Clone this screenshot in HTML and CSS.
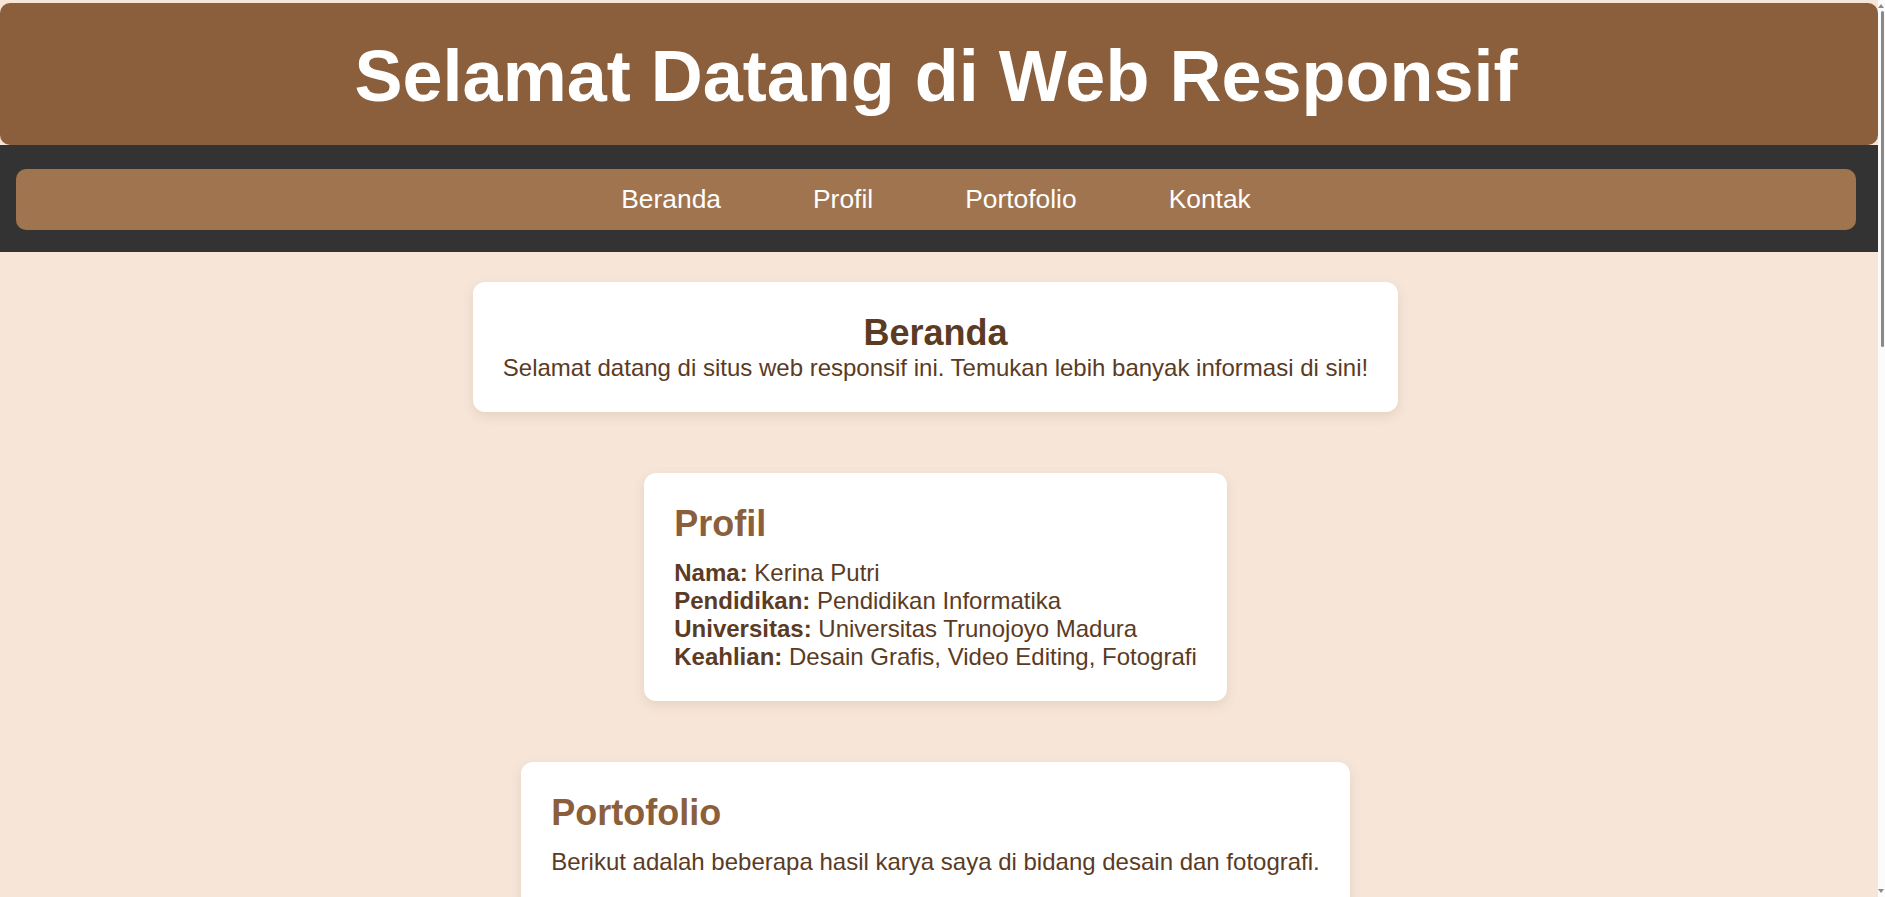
FILE: index.html
```html
<!DOCTYPE html>
<html lang="id">
<head>
<meta charset="utf-8">
<title>Web Responsif</title>
<link rel="stylesheet" href="styles.css">
</head>
<body>
  <header class="site-header">
    <h1 class="site-title">Selamat Datang di Web Responsif</h1>
  </header>
  <nav class="site-nav">
    <div class="nav-bar">
      <a class="nav-link" href="#beranda">Beranda</a>
      <a class="nav-link" href="#profil">Profil</a>
      <a class="nav-link" href="#portofolio">Portofolio</a>
      <a class="nav-link" href="#kontak">Kontak</a>
    </div>
  </nav>
  <main class="content">
    <section class="card card-center" id="beranda">
      <h2 class="card-title-dark">Beranda</h2>
      <p class="card-text">Selamat datang di situs web responsif ini. Temukan lebih banyak informasi di sini!</p>
    </section>
    <section class="card" id="profil">
      <h2 class="card-title">Profil</h2>
      <p class="card-text"><strong>Nama:</strong> Kerina Putri<br>
      <strong>Pendidikan:</strong> Pendidikan Informatika<br>
      <strong>Universitas:</strong> Universitas Trunojoyo Madura<br>
      <strong>Keahlian:</strong> Desain Grafis, Video Editing, Fotografi</p>
    </section>
    <section class="card card-tall" id="portofolio">
      <h2 class="card-title">Portofolio</h2>
      <p class="card-text">Berikut adalah beberapa hasil karya saya di bidang desain dan fotografi.</p>
    </section>
  </main>
  <div class="scrollbar" aria-hidden="true">
    <div class="scroll-arrow scroll-arrow-up"></div>
    <div class="scroll-thumb"></div>
    <div class="scroll-arrow scroll-arrow-down"></div>
  </div>
</body>
</html>
```

FILE: styles.css
```css
html {
  background: #f7e6d8;
  scrollbar-width: none;
}

html::-webkit-scrollbar {
  display: none;
}

body {
  margin: 0 7px 0 0;
  padding-top: 3px;
  background: #f7e6d8;
  font-family: "Liberation Sans", Arial, sans-serif;
  font-size: 24px;
  color: #5b3b24;
}

.site-header {
  background: #8b5e3c;
  border-radius: 10px;
}

.site-title {
  margin: 0;
  padding: 33px 6px 29px 0;
  font-size: 72px;
  line-height: 80px;
  font-weight: bold;
  color: #ffffff;
  text-align: center;
}

.site-nav {
  background: #333333;
  padding: 24px 22px 22px 16px;
}

.nav-bar {
  height: 61px;
  background: #a0744f;
  border-radius: 10px;
  display: flex;
  align-items: center;
  justify-content: center;
  gap: 92px;
}

.nav-link {
  color: #ffffff;
  text-decoration: none;
  font-size: 26.4px;
}

.content {
  display: flex;
  flex-direction: column;
  align-items: center;
  gap: 61px;
  padding: 30px 7px 1400px 0;
}

.card {
  background: #ffffff;
  border-radius: 12px;
  padding: 30px;
  box-shadow: 0 4px 12px rgba(90, 55, 25, 0.12);
}

.card-center {
  text-align: center;
}

.card-tall {
  min-height: 300px;
}

.card-title-dark {
  margin: 0;
  font-size: 36px;
  color: #5b3b24;
}

.card-title {
  margin: 0 0 14px;
  font-size: 36px;
  color: #8b5e3c;
}

.card-text {
  margin: 0;
}

.scrollbar {
  position: fixed;
  top: 0;
  right: 0;
  width: 7px;
  height: 100vh;
  background: #fbfbfb;
  display: flex;
  flex-direction: column;
  align-items: flex-end;
}

.scroll-arrow {
  width: 0;
  height: 0;
  margin: 4px 1px 0 0;
  border-left: 3px solid transparent;
  border-right: 3px solid transparent;
}

.scroll-arrow-up {
  border-bottom: 4px solid #8a8a8a;
}

.scroll-arrow-down {
  margin: auto 1px 4px 0;
  border-top: 4px solid #8a8a8a;
}

.scroll-thumb {
  width: 3px;
  height: 336px;
  margin: 3px 1px 0 0;
  border-radius: 2px;
  background: #8a8a8a;
}
```
